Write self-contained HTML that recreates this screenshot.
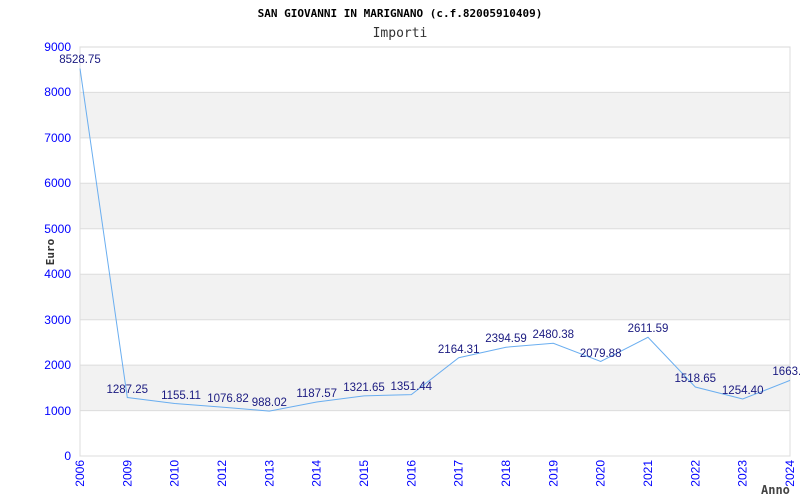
<!DOCTYPE html><html><head><style>body{margin:0;background:#fff}svg{display:block}</style></head><body>
<svg width="800" height="500" xmlns="http://www.w3.org/2000/svg" font-family="Liberation Sans, sans-serif">
<text x="400" y="17" text-anchor="middle" font-family="DejaVu Sans Mono, monospace" font-weight="bold" font-size="11">SAN GIOVANNI IN MARIGNANO (c.f.82005910409)</text>
<text x="400" y="37" text-anchor="middle" font-family="DejaVu Sans Mono, monospace" font-size="13" fill="#333">Importi</text>
<rect x="80" y="47" width="710" height="409" fill="#fff" stroke="#d8d8d8"/>
<g fill="#f2f2f2"><rect x="80" y="92.4" width="710" height="45.4"/><rect x="80" y="183.3" width="710" height="45.5"/><rect x="80" y="274.2" width="710" height="45.4"/><rect x="80" y="365.1" width="710" height="45.4"/></g>
<g stroke="#dcdcdc"><line x1="80" x2="790" y1="92.4" y2="92.4"/><line x1="80" x2="790" y1="137.9" y2="137.9"/><line x1="80" x2="790" y1="183.3" y2="183.3"/><line x1="80" x2="790" y1="228.8" y2="228.8"/><line x1="80" x2="790" y1="274.2" y2="274.2"/><line x1="80" x2="790" y1="319.7" y2="319.7"/><line x1="80" x2="790" y1="365.1" y2="365.1"/><line x1="80" x2="790" y1="410.6" y2="410.6"/><line x1="80" x2="80" y1="47" y2="456"/><line x1="790" x2="790" y1="47" y2="456"/><line x1="80" x2="790" y1="456" y2="456"/></g>
<g fill="#0000ff" font-size="12" text-anchor="end"><text x="71" y="51">9000</text><text x="71" y="96">8000</text><text x="71" y="142">7000</text><text x="71" y="187">6000</text><text x="71" y="233">5000</text><text x="71" y="278">4000</text><text x="71" y="324">3000</text><text x="71" y="369">2000</text><text x="71" y="415">1000</text><text x="71" y="460">0</text></g>
<text transform="translate(54,252) rotate(-90)" text-anchor="middle" font-family="DejaVu Sans Mono, monospace" font-size="11" font-weight="bold" fill="#333">Euro</text>
<text x="761" y="494" font-family="DejaVu Sans Mono, monospace" font-size="12" font-weight="bold" fill="#444">Anno</text>
<g fill="#0000ff" font-size="12" text-anchor="end">
<text transform="translate(84,460) rotate(-90)">2006</text><text transform="translate(131.3,460) rotate(-90)">2009</text><text transform="translate(178.7,460) rotate(-90)">2010</text><text transform="translate(226,460) rotate(-90)">2012</text><text transform="translate(273.3,460) rotate(-90)">2013</text><text transform="translate(320.7,460) rotate(-90)">2014</text><text transform="translate(368,460) rotate(-90)">2015</text><text transform="translate(415.3,460) rotate(-90)">2016</text><text transform="translate(462.7,460) rotate(-90)">2017</text><text transform="translate(510,460) rotate(-90)">2018</text><text transform="translate(557.3,460) rotate(-90)">2019</text><text transform="translate(604.7,460) rotate(-90)">2020</text><text transform="translate(652,460) rotate(-90)">2021</text><text transform="translate(699.3,460) rotate(-90)">2022</text><text transform="translate(746.7,460) rotate(-90)">2023</text><text transform="translate(794,460) rotate(-90)">2024</text></g>
<polyline fill="none" stroke="#6aaef0" stroke-width="1" points="80,68.5 127.3,397.5 174.7,403.5 222,407.1 269.3,411.1 316.7,402 364,395.9 411.3,394.6 458.7,357.7 506,347.2 553.3,343.3 600.7,361.5 648,337.3 695.3,387 742.7,399 790,380.4"/>
<g fill="#1a1a80" font-size="11.5" text-anchor="middle">
<text x="80" y="63">8528.75</text><text x="127.3" y="393">1287.25</text><text x="181" y="399">1155.11</text><text x="228" y="402">1076.82</text><text x="269.3" y="406">988.02</text><text x="316.7" y="397">1187.57</text><text x="364" y="391">1321.65</text><text x="411.3" y="390">1351.44</text><text x="458.7" y="353">2164.31</text><text x="506" y="342">2394.59</text><text x="553.3" y="338">2480.38</text><text x="600.7" y="357">2079.88</text><text x="648" y="332">2611.59</text><text x="695.3" y="382">1518.65</text><text x="742.7" y="394">1254.40</text><text x="790" y="375">1663.5</text></g>
</svg></body></html>
